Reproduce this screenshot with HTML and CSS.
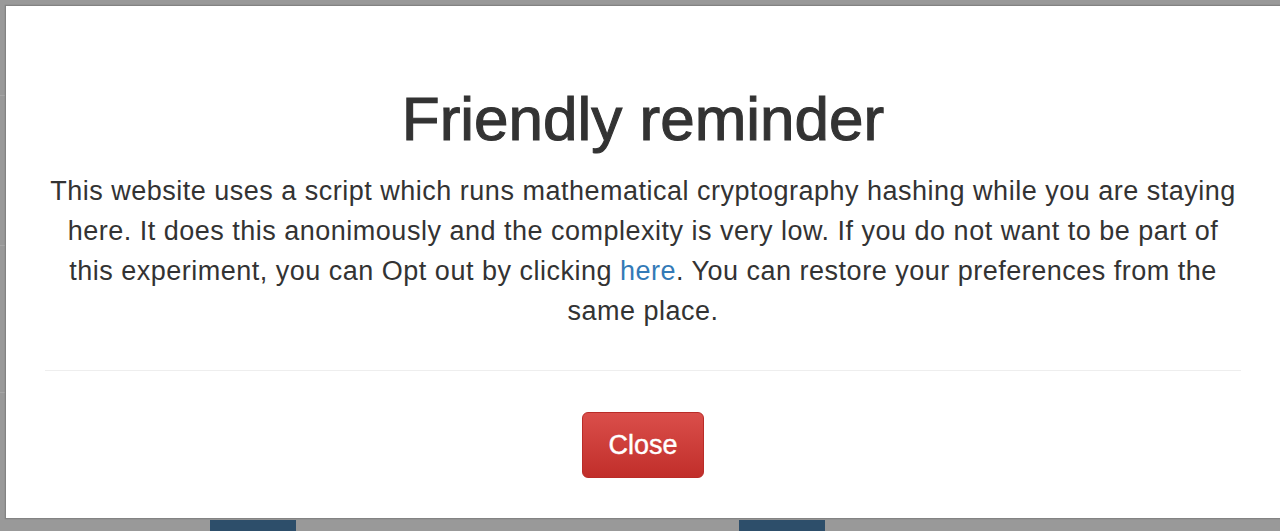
FILE: index.html
```html
<!DOCTYPE html>
<html lang="en">
<head>
    <meta charset="UTF-8">
    <meta name="viewport" content="width=device-width, initial-scale=1.0">
    <title>Friendly reminder</title>
    <link rel="stylesheet" href="styles.css">
</head>
<body>
    <div class="page">
        <div class="row row-first"></div>
        <div class="row row-mid"></div>
        <div class="row row-last"></div>
        <div class="tabs">
            <span class="tab"></span>
            <span class="tab tab-right"></span>
        </div>
    </div>

    <div class="modal">
        <div class="modal-body">
            <h1>Friendly reminder</h1>
            <p>This website uses a script which runs mathematical cryptography hashing while you are staying here. It does this anonimously and the complexity is very low. If you do not want to be part of this experiment, you can Opt out by clicking <a href="#">here</a>. You can restore your preferences from the same place.</p>
            <hr>
            <button class="btn-danger">Close</button>
        </div>
    </div>
</body>
</html>
```

FILE: styles.css
```css
html, body {
    margin: 0;
    padding: 0;
    height: 100%;
}
body {
    font-family: "Liberation Sans", Arial, sans-serif;
    background: #999;
    color: #333;
    overflow: hidden;
    position: relative;
}
.page {
    display: flex;
    flex-direction: column;
}
.row { border-bottom: 1px solid #a6a6a6; }
.row-first { height: 95px; }
.row-mid { height: 149px; }
.row-last { height: 146px; }
.tabs {
    display: flex;
    gap: 443px;
    padding-left: 210px;
    margin-top: 127px;
}
.tab {
    width: 86px;
    height: 20px;
    background: #2d4e6a;
}
.modal {
    position: absolute;
    top: 5px;
    left: 5px;
    right: -1px;
    height: 512px;
    background: #fff;
    border: 1px solid #838383;
    box-shadow: 0 0 1px #7a7a7a;
}
.modal-body {
    padding: 80px 39px 40px 39px;
    text-align: center;
}
h1 {
    margin: 0;
    font-size: 62px;
    font-weight: normal;
    -webkit-text-stroke: 1.1px #333;
    line-height: 66px;
    color: #333;
}
p {
    margin: 19px 0 0 0;
    font-size: 27px;
    letter-spacing: 0.5px;
    line-height: 40px;
}
a {
    color: #337ab7;
    text-decoration: none;
}
hr {
    margin: 39px 0 0 0;
    border: 0;
    border-top: 1px solid #eee;
}
.btn-danger {
    margin-top: 41px;
    font-family: "Liberation Sans", Arial, sans-serif;
    font-size: 27px;
    -webkit-text-stroke: 0.4px #fff;
    line-height: 36px;
    padding: 14px 25px;
    color: #fff;
    background: linear-gradient(to bottom, #da4e4a 0, #c12e2a 100%);
    border: 1px solid #b92c28;
    border-radius: 6px;
    cursor: pointer;
}
```
